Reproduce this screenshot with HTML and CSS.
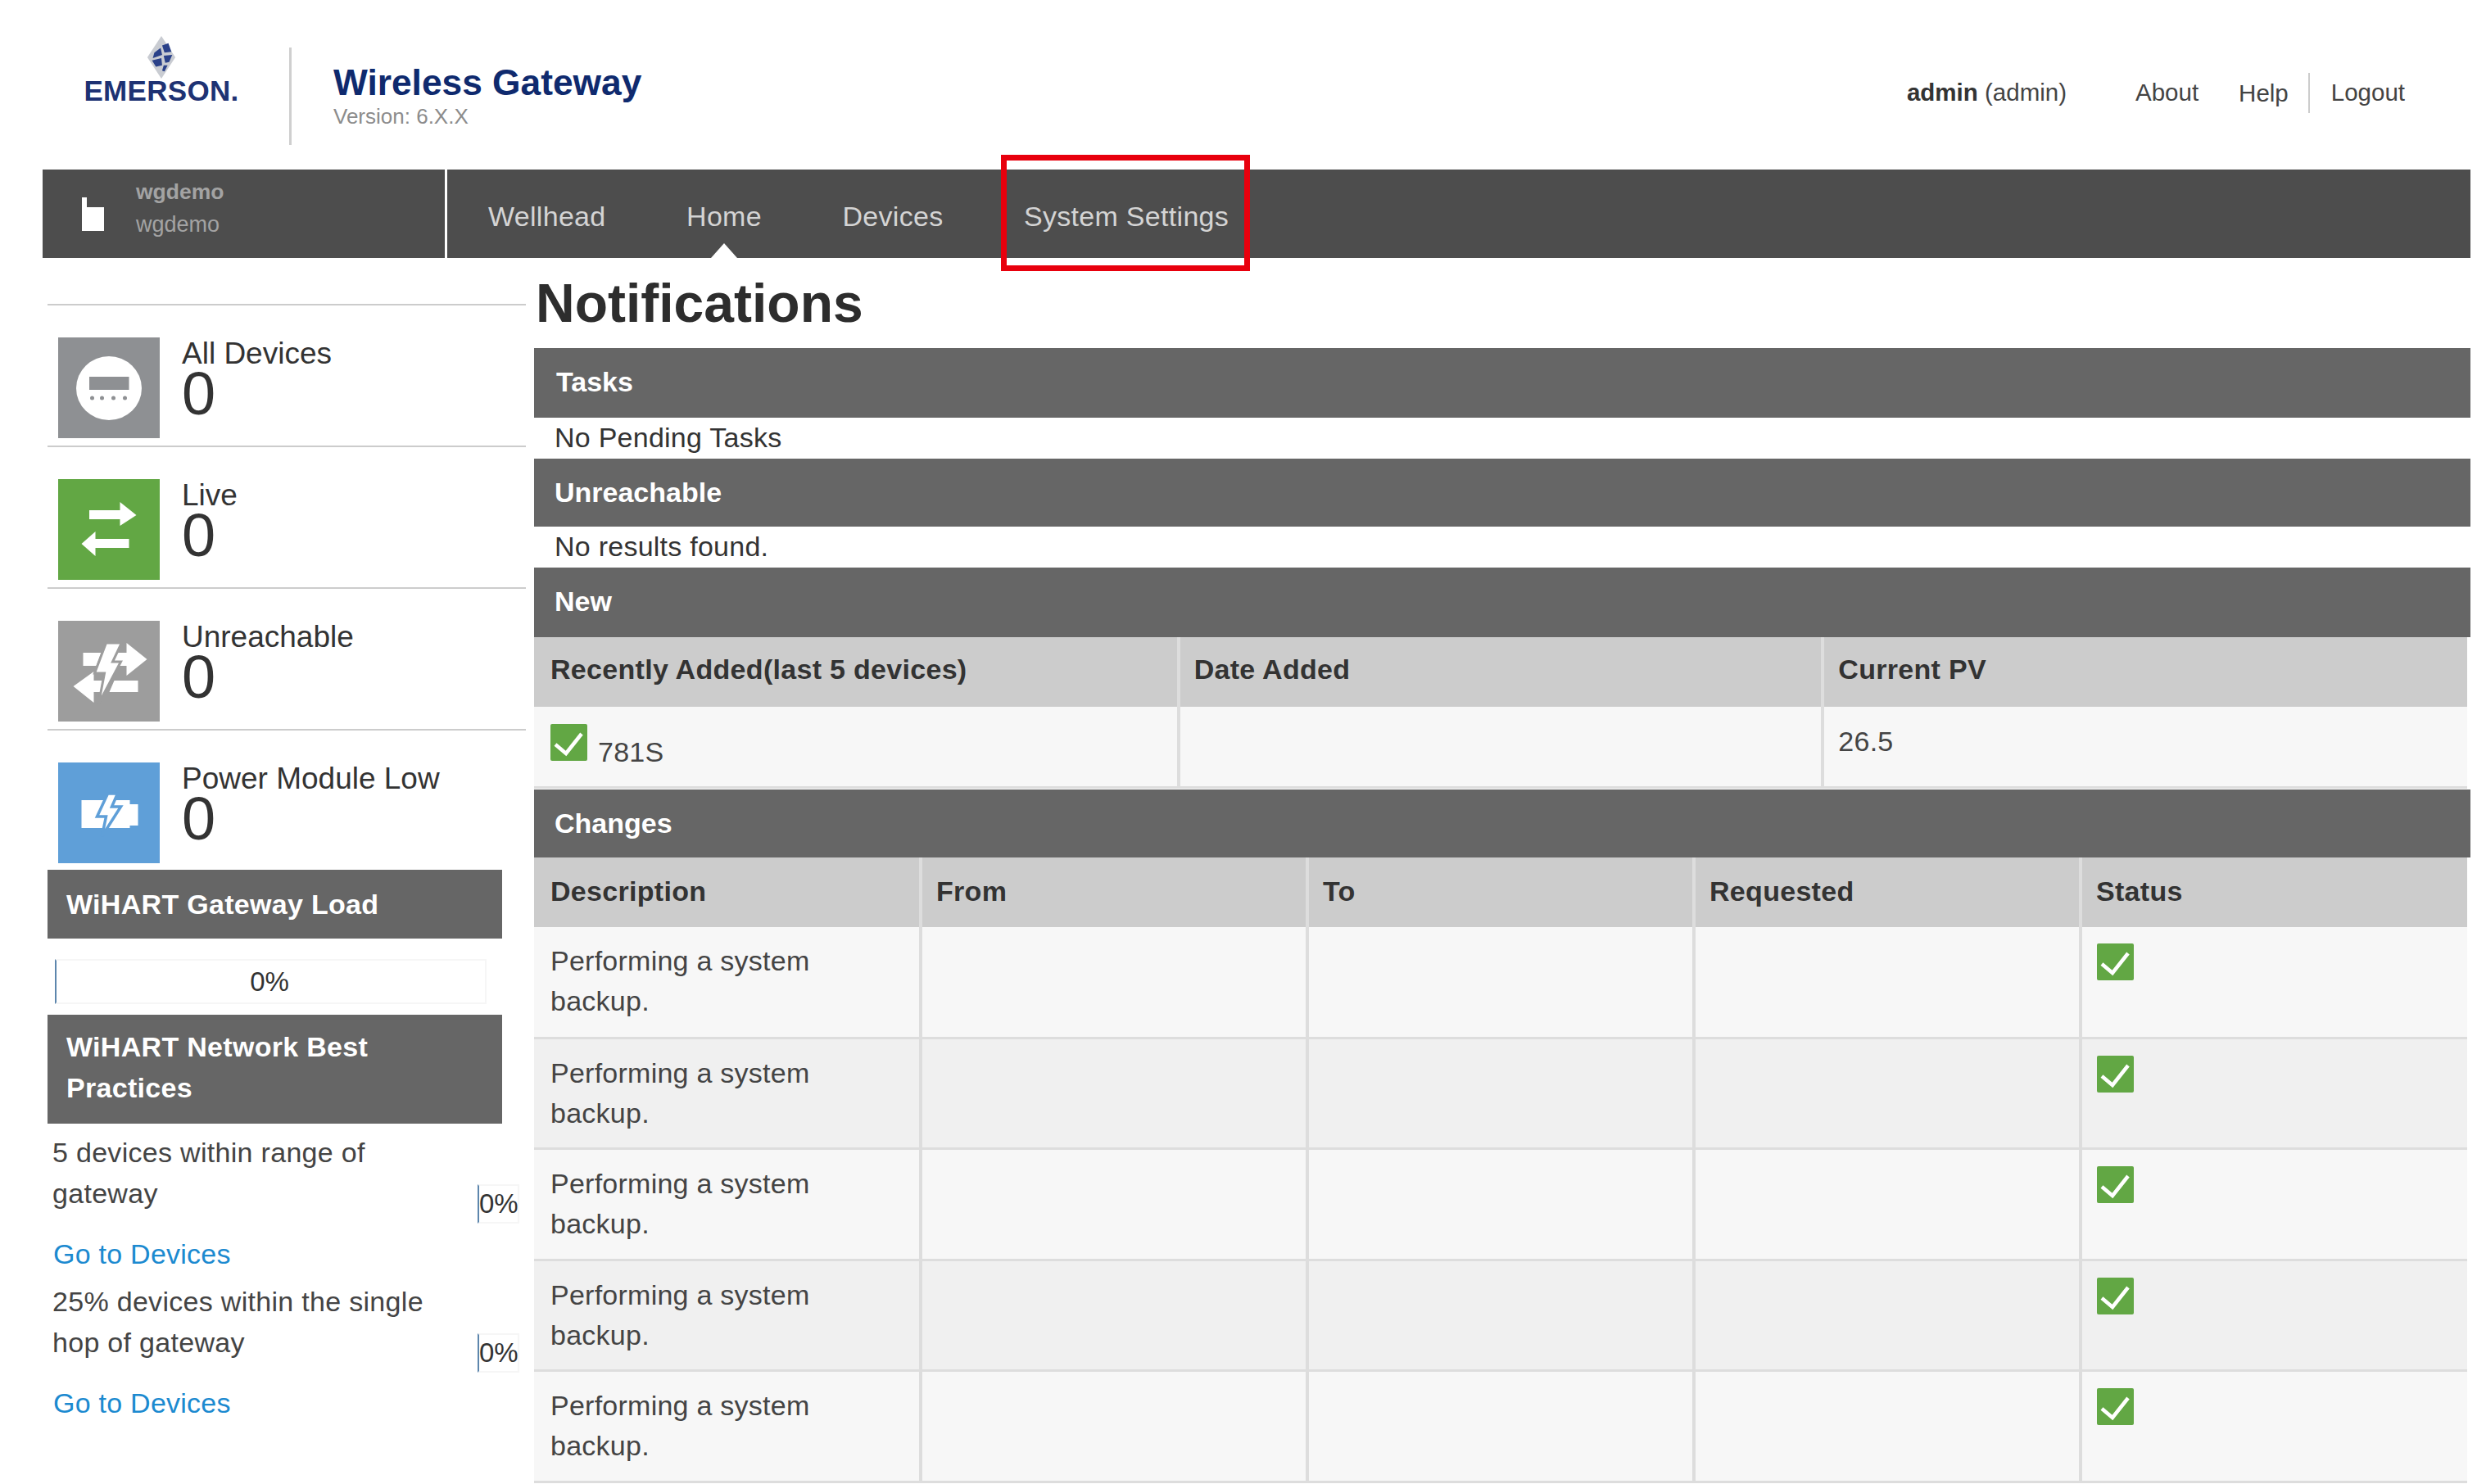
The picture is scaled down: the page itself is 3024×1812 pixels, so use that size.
FILE: index.html
```html
<!DOCTYPE html>
<html lang="en">
<head>
<meta charset="utf-8">
<title>Wireless Gateway</title>
<link rel="stylesheet" href="styles.css">
</head>
<body>
<svg class="defs" width="0" height="0" aria-hidden="true">
  <symbol id="check" viewBox="0 0 45 45">
    <rect width="45" height="45" rx="2" fill="#62a744"/>
    <path d="M6 25 L19 36 L38 12" fill="none" stroke="#fff" stroke-width="4.500"/>
  </symbol>
</svg>
<header class="top">
  <div class="logo">
    <svg class="diamond" viewBox="0 0 40 54" preserveAspectRatio="none" aria-hidden="true">
      <path d="M20 0 L38 27 L20 54 L2 27 Z" fill="#c9ccd2"/>
      <path d="M21 12 L29 9 L33 20 L24 21 Z M11 21 L19 15 L21 24 L9 28 Z M23 25 L34 24 L30 33 L25 34 Z M8 31 L20 28 L21 37 L13 39 Z M23 37 L28 37 L24 45 L21 44 Z" fill="#2a4189"/>
    </svg>
    <span class="logo-word">EMERSON.</span>
  </div>
  <div class="brand">
    <div class="brand-title">Wireless Gateway</div>
    <div class="brand-version">Version: 6.X.X</div>
  </div>
  <div class="user"><b>admin</b> (admin)</div>
  <nav class="links">
    <a class="link">About</a>
    <a class="link link-help">Help</a>
    <a class="link link-logout">Logout</a>
  </nav>
</header>

<div class="navbar">
  <div class="site">
    <svg class="site-icon" viewBox="0 0 27 41" aria-hidden="true"><path d="M0 0 H6 V12 H27 V41 H0 Z" fill="#fff"/></svg>
    <div class="site-names">
      <div class="site-name strong">wgdemo</div>
      <div class="site-name">wgdemo</div>
    </div>
  </div>
  <div class="menu">
    <a class="menu-item">Wellhead</a>
    <a class="menu-item active">Home</a>
    <a class="menu-item">Devices</a>
    <a class="menu-item highlighted">System Settings</a>
  </div>
</div>

<div class="layout">
  <aside class="sidebar">
    <div class="stat">
      <div class="tile tile-grey">
        <svg viewBox="0 0 123 123" aria-hidden="true">
          <ellipse cx="61.500" cy="62" rx="40" ry="39" fill="#fff"/>
          <rect x="37.500" y="48" width="48.500" height="16" fill="#8e9093"/>
          <g fill="#8e9093"><circle cx="41" cy="74" r="2.500"/><circle cx="53" cy="74" r="2.500"/><circle cx="67" cy="74" r="2.500"/><circle cx="81" cy="74" r="2.500"/></g>
        </svg>
      </div>
      <div class="stat-text"><div class="stat-label">All Devices</div><div class="stat-value">0</div></div>
    </div>
    <div class="stat">
      <div class="tile tile-green">
        <svg viewBox="0 0 123 123" aria-hidden="true">
          <path d="M37.500 38 H75 V28 L95 44 L75 57 V49 H37.500 Z M86 73 H45 V64 L28 79 L45 94 V84 H86 Z" fill="#fff"/>
        </svg>
      </div>
      <div class="stat-text"><div class="stat-label">Live</div><div class="stat-value">0</div></div>
    </div>
    <div class="stat">
      <div class="tile tile-mid">
        <svg viewBox="0 0 123 123" aria-hidden="true">
          <path d="M30 39 H52 L46 55 H30 Z M72 39 H83 V27 L108 47 L83 67 V55 H65 Z M68 73 H97 V87 H62 Z M43 62 L18 80 L43 100 V87 H52 L58 73 H43 Z" fill="#fff"/>
          <path d="M58 27 H77 L66 50 H76 L49 101 L56 64 H44 Z" fill="#fff" stroke="#9d9d9d" stroke-width="3"/>
        </svg>
      </div>
      <div class="stat-text"><div class="stat-label">Unreachable</div><div class="stat-value">0</div></div>
    </div>
    <div class="stat stat-last">
      <div class="tile tile-blue">
        <svg viewBox="0 0 123 123" aria-hidden="true">
          <path d="M28 46 H87 V51 H97 V77 H87 V80 H28 Z" fill="#fff"/>
          <path d="M60 38 H72 L65 54 H76 L53 90 L58 66 H47 Z" fill="#fff" stroke="#5f9fd8" stroke-width="3.500"/>
        </svg>
      </div>
      <div class="stat-text"><div class="stat-label">Power Module Low</div><div class="stat-value">0</div></div>
    </div>

    <h2 class="side-bar">WiHART Gateway Load</h2>
    <div class="progress"><span class="progress-text">0%</span></div>
    <h2 class="side-bar side-bar-tall">WiHART Network Best Practices</h2>

    <div class="practice">
      <div class="practice-main">
        <div class="practice-text">5 devices within range of gateway</div>
        <div class="practice-pct">0%</div>
      </div>
      <a class="go">Go to Devices</a>
    </div>
    <div class="practice">
      <div class="practice-main">
        <div class="practice-text">25% devices within the single hop of gateway</div>
        <div class="practice-pct">0%</div>
      </div>
      <a class="go">Go to Devices</a>
    </div>
  </aside>

  <main class="content">
    <h1 class="title">Notifications</h1>
    <h2 class="bar bar-tasks">Tasks</h2>
    <div class="empty">No Pending Tasks</div>
    <h2 class="bar bar-short">Unreachable</h2>
    <div class="empty">No results found.</div>
    <h2 class="bar">New</h2>
    <table class="grid grid-new">
      <thead><tr><th>Recently Added(last 5 devices)</th><th>Date Added</th><th>Current PV</th></tr></thead>
      <tbody><tr>
        <td><svg class="check check-inline"><use href="#check"/></svg><span class="device">781S</span></td>
        <td></td>
        <td>26.5</td>
      </tr></tbody>
    </table>
    <h2 class="bar bar-short">Changes</h2>
    <table class="grid grid-changes">
      <thead><tr><th>Description</th><th>From</th><th>To</th><th>Requested</th><th>Status</th></tr></thead>
      <tbody>
        <tr><td>Performing a system backup.</td><td></td><td></td><td></td><td><svg class="check"><use href="#check"/></svg></td></tr>
        <tr><td>Performing a system backup.</td><td></td><td></td><td></td><td><svg class="check"><use href="#check"/></svg></td></tr>
        <tr><td>Performing a system backup.</td><td></td><td></td><td></td><td><svg class="check"><use href="#check"/></svg></td></tr>
        <tr><td>Performing a system backup.</td><td></td><td></td><td></td><td><svg class="check"><use href="#check"/></svg></td></tr>
        <tr><td>Performing a system backup.</td><td></td><td></td><td></td><td><svg class="check"><use href="#check"/></svg></td></tr>
      </tbody>
    </table>
  </main>
</div>
</body>
</html>
```
FILE: styles.css
```css
* { box-sizing: border-box; }
html, body { margin: 0; padding: 0; }
body {
  width: 3024px;
  height: 1812px;
  overflow: hidden;
  background: #fff;
  color: #333;
  font-family: "Liberation Sans", Arial, sans-serif;
  font-size: 34px;
}
.defs { display: block; height: 0; }

/* top header */
.top {
  display: flex;
  align-items: center;
  height: 207px;
  padding: 0 88px 0 102px;
}
.logo {
  display: flex;
  flex-direction: column;
  align-items: center;
  width: 190px;
  margin-top: -37px;
}
.diamond { width: 38px; height: 52px; display: block; }
.logo-word {
  font-size: 35px;
  line-height: 30px;
  font-weight: 700;
  letter-spacing: .3px;
  color: #1e3273;
  white-space: nowrap;
}
.brand {
  margin-left: 61px;
  padding-left: 51px;
  border-left: 3px solid #cfcfcf;
  height: 119px;
  margin-top: 27px;
  display: flex;
  flex-direction: column;
  justify-content: center;
}
.brand-title {
  font-size: 44.300px;
  line-height: 50px;
  font-weight: 700;
  color: #0f2a6e;
}
.brand-version {
  font-size: 26px;
  line-height: 32px;
  color: #8c8c8c;
}
.user {
  margin-left: auto;
  font-size: 29.500px;
  color: #444;
  margin-top: 19px;
}
.user b { color: #333; }
.links {
  display: flex;
  align-items: center;
  margin-left: 84px;
  margin-top: 19px;
}
.link { font-size: 29.500px; color: #444; }
.link-help {
  margin-left: 49px;
  padding-right: 24px;
  line-height: 49px;
  border-right: 2px solid #ccc;
}
.link-logout { margin-left: 26px; }

/* nav */
.navbar {
  display: flex;
  height: 108px;
  margin: 0 8px 0 52px;
  background: #4d4d4d;
}
.site {
  display: flex;
  align-items: center;
  width: 494px;
  padding-left: 48px;
  border-right: 3px solid #fff;
}
.site-icon { width: 27px; height: 41px; display: block; }
.site-names { margin-left: 39px; margin-top: -15px; }
.site-name { font-size: 27px; line-height: 40px; color: #a3a3a3; }
.site-name.strong { font-weight: 700; font-size: 26.500px; }
.menu {
  display: flex;
  align-items: center;
  padding-left: 50px;
  gap: 98.500px;
  padding-top: 6px;
}
.menu-item {
  position: relative;
  font-size: 34px;
  letter-spacing: .3px;
  line-height: 102px;
  color: #d4d4d4;
  white-space: nowrap;
}
.active::after {
  content: "";
  position: absolute;
  left: 50%;
  bottom: 0;
  margin-left: -16px;
  border-left: 16px solid transparent;
  border-right: 16px solid transparent;
  border-bottom: 18px solid #fff;
}
.highlighted::after {
  content: "";
  position: absolute;
  left: -28px;
  right: -26px;
  top: -24px;
  bottom: -16px;
  border: 7px solid #e8000d;
}

/* layout */
.layout {
  display: grid;
  grid-template-columns: 584px 2364px;
  column-gap: 10px;
  margin-left: 58px;
}

/* sidebar */
.sidebar { padding-top: 56px; }
.stat {
  display: flex;
  height: 173px;
  padding: 39px 0 0 13px;
  border-top: 2px solid #ccc;
}
.stat-last { height: 172px; }
.tile { width: 124px; height: 123px; flex: none; }
.tile svg { display: block; width: 100%; height: 100%; }
.tile-grey { background: #8e9093; }
.tile-green { background: #62a744; }
.tile-mid { background: #9d9d9d; }
.tile-blue { background: #5f9fd8; }
.stat-text { margin-left: 27px; }
.stat-label { font-size: 37px; line-height: 40px; color: #333; }
.stat-value { font-size: 74px; line-height: 58px; color: #333; }
.side-bar {
  width: 555px;
  margin: 0;
  padding: 0 23px;
  background: #666;
  color: #fff;
  font-size: 34px;
  font-weight: 700;
  letter-spacing: .3px;
  line-height: 84px;
}
.side-bar-tall {
  line-height: 50px;
  padding-top: 14px;
  padding-bottom: 19px;
}
.progress {
  display: flex;
  align-items: center;
  justify-content: center;
  width: 527px;
  height: 55px;
  margin: 25px 0 13px 9px;
  border: 2px solid #f6f6f6;
  border-left: 2px solid #5d86ad;
}
.progress-text { font-size: 33px; color: #333; padding-right: 3px; }
.practice { padding-left: 6px; margin-top: 10px; }
.practice + .practice { margin-top: 14px; }
.practice-main {
  display: flex;
  justify-content: space-between;
  align-items: flex-end;
  width: 570px;
}
.practice-text { width: 480px; line-height: 50px; letter-spacing: .3px; color: #444; }
.practice-pct {
  width: 51px;
  height: 48px;
  border: 2px solid #f6f6f6;
  border-left: 2px solid #5d86ad;
  font-size: 33px;
  line-height: 44px;
  margin-bottom: -12px;
}
.go { display: block; margin: 30px 0 0 1px; line-height: 38px; letter-spacing: .25px; color: #1c8ad0; }

/* content */
.title {
  margin: 0;
  height: 110px;
  padding-left: 2px;
  font-size: 66px;
  line-height: 110px;
  font-weight: 700;
  color: #2d2d2d;
}
.bar {
  margin: 0;
  height: 85px;
  padding-left: 25px;
  background: #666;
  color: #fff;
  font-size: 34px;
  line-height: 82px;
  font-weight: 700;
}
.bar-short { height: 83px; }
.bar-tasks { padding-left: 27px; }
.empty { height: 50px; padding-left: 25px; font-size: 34px; line-height: 48px; letter-spacing: .25px; color: #333; }
.grid {
  width: 2360px;
  table-layout: fixed;
  border-collapse: collapse;
}
.grid th {
  height: 85px;
  padding: 0 0 1px 17px;
  background: #ccc;
  border-left: 4px solid #ddd;
  text-align: left;
  font-size: 34px;
  letter-spacing: .3px;
  font-weight: 700;
  color: #333;
}
.grid-new th { padding-bottom: 7px; }
.grid th:first-child, .grid td:first-child { border-left: 0; padding-left: 20px; }
.grid td {
  padding: 17px 17px 0;
  vertical-align: top;
  line-height: 49px;
  letter-spacing: .25px;
  background: #f7f7f7;
  border-left: 4px solid #ddd;
  border-bottom: 3px solid #ddd;
  color: #444;
}
.grid-new { margin-bottom: 1px; }
.grid-new td { height: 98px; padding-top: 18px; }
.grid-new td:first-child { padding-top: 21px; }
.grid-changes td { height: 135.500px; }
.grid-changes td:last-child { padding-top: 20px; padding-left: 18px; }
.grid-changes tbody tr:nth-child(even) td { background: #f0f0f0; }
.check { display: block; width: 45px; height: 45px; }
.check-inline { display: inline-block; vertical-align: top; }
.device { margin-left: 13px; position: relative; top: 10px; }
```
